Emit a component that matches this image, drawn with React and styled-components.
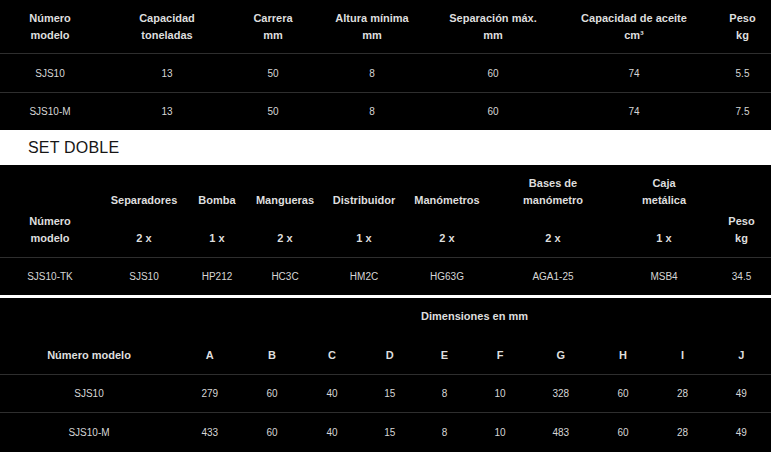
import React from 'react'
import styled, { createGlobalStyle } from 'styled-components'

const GlobalStyle = createGlobalStyle`
  html, body {
    margin: 0;
    padding: 0;
    background: #ffffff;
    overflow: hidden;
  }
  body {
    font-family: "Liberation Sans", Arial, sans-serif;
  }
`

const Page = styled.div`
  width: 771px;
  display: flex;
  flex-direction: column;
  background: #ffffff;
`

const Block = styled.div`
  background: #000;
  margin-bottom: ${p => p.$gap || 0}px;
`

const Table = styled.table`
  width: 100%;
  table-layout: fixed;
  border-collapse: separate;
  border-spacing: 0;
  color: #d6d6d6;
`

const Th = styled.th`
  font-size: 11px;
  font-weight: 700;
  line-height: 17px;
  color: #dedede;
  text-align: center;
  vertical-align: ${p => p.$valign || 'middle'};
  padding: ${p => p.$pad || '10px 2px 9px'};
  border-bottom: ${p => (p.$line ? '1px solid #2e2e2e' : 'none')};
  white-space: nowrap;
`

const Td = styled.td`
  font-size: 10px;
  line-height: 17px;
  text-align: center;
  vertical-align: middle;
  padding: ${p => p.$pad || '10px 2px'};
  border-bottom: ${p => (p.$line ? '1px solid #2e2e2e' : 'none')};
  white-space: nowrap;
`

const SectionTitle = styled.h2`
  margin: 0;
  height: 35px;
  display: flex;
  align-items: center;
  padding-left: 28px;
  font-size: 16px;
  font-weight: 400;
  letter-spacing: 0.2px;
  color: #161616;
  background: #fff;
`

const mainRows = [
  ['SJS10', '13', '50', '8', '60', '74', '5.5'],
  ['SJS10-M', '13', '50', '8', '60', '74', '7.5'],
]

const setParts = [
  ['Separadores', '2 x'],
  ['Bomba', '1 x'],
  ['Mangueras', '2 x'],
  ['Distribuidor', '1 x'],
  ['Manómetros', '2 x'],
  [['Bases de', 'manómetro'], '2 x'],
  [['Caja', 'metálica'], '1 x'],
]

const setRow = ['SJS10-TK', 'SJS10', 'HP212', 'HC3C', 'HM2C', 'HG63G', 'AGA1-25', 'MSB4', '34.5']

const dimCols = ['A', 'B', 'C', 'D', 'E', 'F', 'G', 'H', 'I', 'J']
const dimRows = [
  ['SJS10', '279', '60', '40', '15', '8', '10', '328', '60', '28', '49'],
  ['SJS10-M', '433', '60', '40', '15', '8', '10', '483', '60', '28', '49'],
]

const Lines = ({ text }) =>
  Array.isArray(text) ? text.map((t, i) => <React.Fragment key={i}>{i > 0 && <br />}{t}</React.Fragment>) : text

const MainTable = () => (
  <Block>
    <Table>
      <colgroup>
        {[100, 134, 78, 120, 122, 160, 57].map((w, i) => <col key={i} style={{ width: w }} />)}
      </colgroup>
      <thead>
        <tr>
          <Th $line>Número<br />modelo</Th>
          <Th $line>Capacidad<br />toneladas</Th>
          <Th $line>Carrera<br />mm</Th>
          <Th $line>Altura mínima<br />mm</Th>
          <Th $line>Separación máx.<br />mm</Th>
          <Th $line>Capacidad de aceite<br />cm³</Th>
          <Th $line>Peso<br />kg</Th>
        </tr>
      </thead>
      <tbody>
        {mainRows.map((row, r) => (
          <tr key={r}>
            {row.map((v, i) => (
              <Td key={i} $line={r === 0} $pad={r === 0 ? '11px 2px 10px' : '10px 2px'}>{v}</Td>
            ))}
          </tr>
        ))}
      </tbody>
    </Table>
  </Block>
)

const SetTable = () => (
  <Block $gap={3}>
    <Table>
      <colgroup>
        {[100, 88, 58, 78, 80, 86, 126, 96, 59].map((w, i) => <col key={i} style={{ width: w }} />)}
      </colgroup>
      <thead>
        <tr>
          <Th rowSpan={2} $line $valign="bottom" $pad="0 2px 10px">Número<br />modelo</Th>
          {setParts.map(([name], i) => (
            <Th key={i} $valign="bottom" $pad="10px 2px 0">
              <Lines text={name} />
            </Th>
          ))}
          <Th rowSpan={2} $line $valign="bottom" $pad="0 2px 10px">Peso<br />kg</Th>
        </tr>
        <tr>
          {setParts.map(([, qty], i) => (
            <Th key={i} $line $valign="bottom" $pad="21px 2px 10px">{qty}</Th>
          ))}
        </tr>
      </thead>
      <tbody>
        <tr>
          {setRow.map((v, i) => <Td key={i}>{v}</Td>)}
        </tr>
      </tbody>
    </Table>
  </Block>
)

const DimTable = () => (
  <Block>
    <Table>
      <colgroup>
        {[178, 63.5, 61, 59, 56.5, 53, 58, 63.5, 61, 58, 59.5].map((w, i) => <col key={i} style={{ width: w }} />)}
      </colgroup>
      <thead>
        <tr>
          <Th rowSpan={2} $line $valign="bottom" $pad="0 2px 10px">Número modelo</Th>
          <Th colSpan={10} $pad="10px 2px 0">Dimensiones en mm</Th>
        </tr>
        <tr>
          {dimCols.map(c => (
            <Th key={c} $line $pad="22px 2px 10px">{c}</Th>
          ))}
        </tr>
      </thead>
      <tbody>
        {dimRows.map((row, r) => (
          <tr key={r}>
            {row.map((v, i) => (
              <Td key={i} $line={r === 0} $pad={r === 0 ? '10px 2px' : '11px 2px'}>{v}</Td>
            ))}
          </tr>
        ))}
      </tbody>
    </Table>
  </Block>
)

const App = () => (
  <>
    <GlobalStyle />
    <Page>
      <MainTable />
      <SectionTitle>SET DOBLE</SectionTitle>
      <SetTable />
      <DimTable />
    </Page>
  </>
)

export default App
